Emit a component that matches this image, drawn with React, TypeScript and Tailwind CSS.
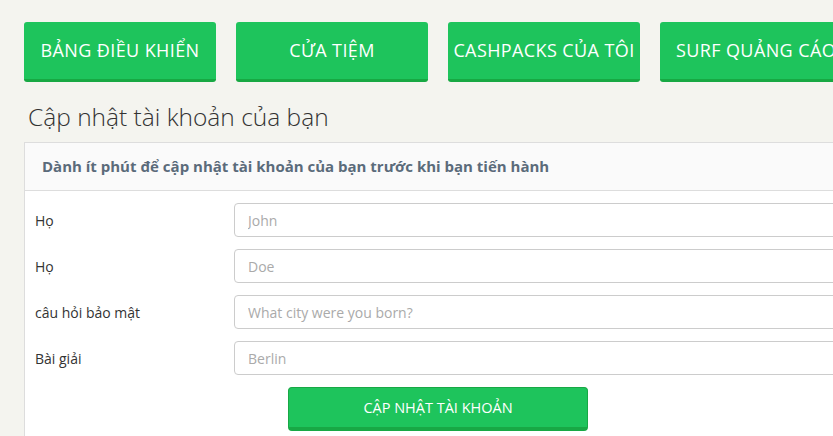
import React from 'react';

const NAV = ['BẢNG ĐIỀU KHIỂN', 'CỬA TIỆM', 'CASHPACKS CỦA TÔI', 'SURF QUẢNG CÁO'];

const FIELDS = [
  { label: 'Họ', placeholder: 'John' },
  { label: 'Họ', placeholder: 'Doe' },
  { label: 'câu hỏi bảo mật', placeholder: 'What city were you born?' },
  { label: 'Bài giải', placeholder: 'Berlin' },
];

export default function App() {
  return (
    <div className="w-full h-[436px] overflow-hidden bg-[#f4f4ef] font-['Open_Sans','Lato',sans-serif] text-[#333]">
      <div className="w-[1000px] pl-6 pt-[22px]">
        {/* Menu */}
        <div className="flex gap-5">
          {NAV.map(n => (
            <div
              key={n}
              className="w-[192px] h-[60px] flex items-center justify-center bg-[#1ec45c] border-b-[3px] border-[#17a843] rounded-[3px] text-white text-[18px] tracking-[0.4px] whitespace-nowrap"
            >
              {n}
            </div>
          ))}
        </div>

        <h1 className="mt-[20px] ml-1 text-[24.5px] font-light leading-[30px]">Cập nhật tài khoản của bạn</h1>

        {/* Panel */}
        <div className="mt-[10px] w-[900px] bg-white border border-[#dddddd]">
          <div className="h-[48px] flex items-center px-[17px] bg-[#fafafa] border-b border-[#dddddd] text-[15px] font-bold text-[#5b6b7a]">
            Dành ít phút để cập nhật tài khoản của bạn trước khi bạn tiến hành
          </div>
          <div className="pt-3 pb-4 px-[10px] flex flex-col gap-3">
            {FIELDS.map((f, i) => (
              <div key={i} className="flex items-center">
                <label className="w-[199px] text-[14px]">{f.label}</label>
                <input
                  placeholder={f.placeholder}
                  className="flex-1 h-[34px] px-[13px] border border-[#cccccc] rounded-[4px] text-[14px] placeholder:text-[#aaaaaa] outline-none"
                />
              </div>
            ))}
            <div className="flex">
              <button className="ml-[253px] w-[300px] h-[44px] bg-[#1ec45c] border border-[#18a845] border-b-[4px] rounded-[4px] text-white text-[14.5px]">
                CẬP NHẬT TÀI KHOẢN
              </button>
            </div>
          </div>
        </div>
      </div>
    </div>
  );
}
